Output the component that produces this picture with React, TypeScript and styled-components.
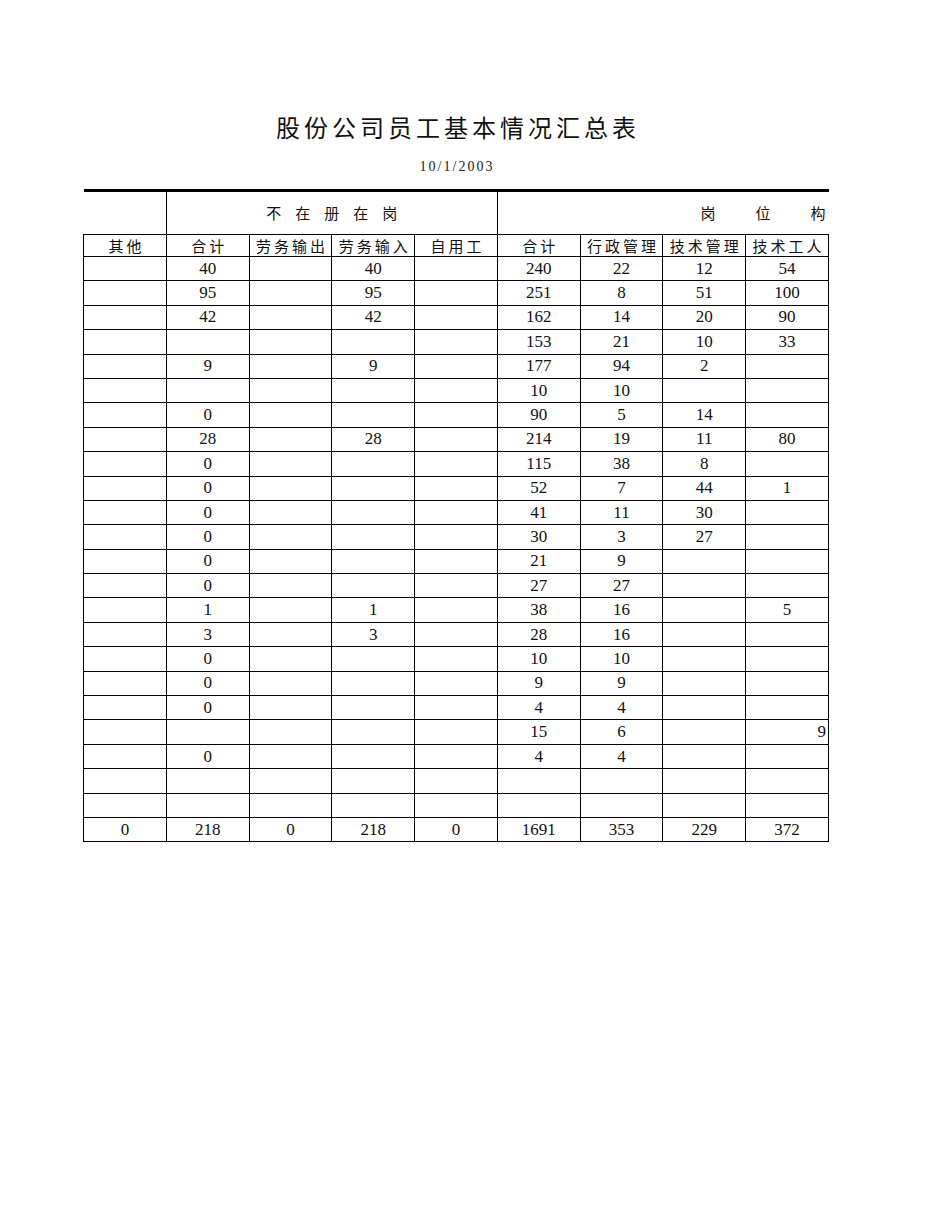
import React from "react";
import styled, { createGlobalStyle } from "styled-components";

const GlobalStyle = createGlobalStyle`
  html, body {
    margin: 0;
    padding: 0;
    background: #fff;
  }
  body {
    font-family: "Liberation Serif", "Noto Sans CJK SC", serif;
    color: #000;
  }
`;

const Page = styled.div`
  width: 950px;
  min-height: 1230px;
  padding-top: 110px;
  box-sizing: border-box;
`;

const Sheet = styled.div`
  width: 746px;
  margin-left: 83px;
  display: flex;
  flex-direction: column;
  align-items: center;
`;

const Title = styled.h1`
  margin: 0;
  font-family: "Noto Sans CJK SC", sans-serif;
  font-weight: 400;
  font-size: 24px;
  line-height: 34px;
  letter-spacing: 4px;
  padding-left: 4px;
  color: #111;
`;

const DateLine = styled.div`
  margin-top: 13px;
  font-family: "Liberation Serif", serif;
  font-size: 14px;
  line-height: 20px;
  letter-spacing: 2px;
  padding-left: 2px;
  color: #222;
`;

const Grid = styled.table`
  margin-top: 12px;
  width: 746px;
  border-collapse: collapse;
  table-layout: fixed;
  border-top: 3px solid #000;
`;

const TopHead = styled.td<{ $edge?: boolean }>`
  height: 42px;
  padding: 0;
  border-left: ${(p) => (p.$edge ? "none" : "1px solid #000")};
  border-right: none;
  border-bottom: 1px solid #000;
`;

const SpacedLabel = styled.div<{ $end?: boolean; $gap: number }>`
  display: flex;
  justify-content: ${(p) => (p.$end ? "flex-end" : "center")};
  gap: ${(p) => p.$gap}px;
  padding-right: ${(p) => (p.$end ? "3px" : "0")};
  font-family: "Noto Sans CJK SC", sans-serif;
  font-size: 15px;
  line-height: 20px;
  color: #111;
`;

const SubHead = styled.td`
  height: 21px;
  padding: 0 0 0 3px;
  border: 1px solid #000;
  text-align: center;
  font-family: "Noto Sans CJK SC", sans-serif;
  font-size: 15px;
  line-height: 20px;
  letter-spacing: 3px;
  white-space: nowrap;
  overflow: hidden;
  color: #111;
`;

const Row = styled.tr`
  height: 24.4px;
`;

const Cell = styled.td<{ $right?: boolean }>`
  padding: 0 ${(p) => (p.$right ? "2px" : "0")} 0 0;
  border: 1px solid #000;
  text-align: ${(p) => (p.$right ? "right" : "center")};
  font-family: "Liberation Serif", serif;
  font-size: 17px;
  line-height: 20px;
  color: #111;
`;

const columns = [
  "其他",
  "合计",
  "劳务输出",
  "劳务输入",
  "自用工",
  "合计",
  "行政管理",
  "技术管理",
  "技术工人",
];

// "r:" prefix marks a value that sits at the right edge of its cell
const rows: string[][] = [
  ["", "40", "", "40", "", "240", "22", "12", "54"],
  ["", "95", "", "95", "", "251", "8", "51", "100"],
  ["", "42", "", "42", "", "162", "14", "20", "90"],
  ["", "", "", "", "", "153", "21", "10", "33"],
  ["", "9", "", "9", "", "177", "94", "2", ""],
  ["", "", "", "", "", "10", "10", "", ""],
  ["", "0", "", "", "", "90", "5", "14", ""],
  ["", "28", "", "28", "", "214", "19", "11", "80"],
  ["", "0", "", "", "", "115", "38", "8", ""],
  ["", "0", "", "", "", "52", "7", "44", "1"],
  ["", "0", "", "", "", "41", "11", "30", ""],
  ["", "0", "", "", "", "30", "3", "27", ""],
  ["", "0", "", "", "", "21", "9", "", ""],
  ["", "0", "", "", "", "27", "27", "", ""],
  ["", "1", "", "1", "", "38", "16", "", "5"],
  ["", "3", "", "3", "", "28", "16", "", ""],
  ["", "0", "", "", "", "10", "10", "", ""],
  ["", "0", "", "", "", "9", "9", "", ""],
  ["", "0", "", "", "", "4", "4", "", ""],
  ["", "", "", "", "", "15", "6", "", "r:9"],
  ["", "0", "", "", "", "4", "4", "", ""],
  ["", "", "", "", "", "", "", "", ""],
  ["", "", "", "", "", "", "", "", ""],
  ["0", "218", "0", "218", "0", "1691", "353", "229", "372"],
];

export default function App() {
  return (
    <Page>
      <GlobalStyle />
      <Sheet>
        <Title>股份公司员工基本情况汇总表</Title>
        <DateLine>10/1/2003</DateLine>
        <Grid>
          <colgroup>
            {columns.map((_, i) => (
              <col key={i} />
            ))}
          </colgroup>
          <thead>
            <tr>
              <TopHead $edge />
              <TopHead colSpan={4}>
                <SpacedLabel $gap={14}>
                  {["不", "在", "册", "在", "岗"].map((c, i) => (
                    <span key={i}>{c}</span>
                  ))}
                </SpacedLabel>
              </TopHead>
              <TopHead colSpan={4}>
                <SpacedLabel $end $gap={40}>
                  {["岗", "位", "构"].map((c, i) => (
                    <span key={i}>{c}</span>
                  ))}
                </SpacedLabel>
              </TopHead>
            </tr>
            <tr>
              {columns.map((c, i) => (
                <SubHead key={i}>{c}</SubHead>
              ))}
            </tr>
          </thead>
          <tbody>
            {rows.map((r, ri) => (
              <Row key={ri}>
                {r.map((v, ci) => {
                  const right = v.startsWith("r:");
                  return (
                    <Cell key={ci} $right={right}>
                      {right ? v.slice(2) : v}
                    </Cell>
                  );
                })}
              </Row>
            ))}
          </tbody>
        </Grid>
      </Sheet>
    </Page>
  );
}
